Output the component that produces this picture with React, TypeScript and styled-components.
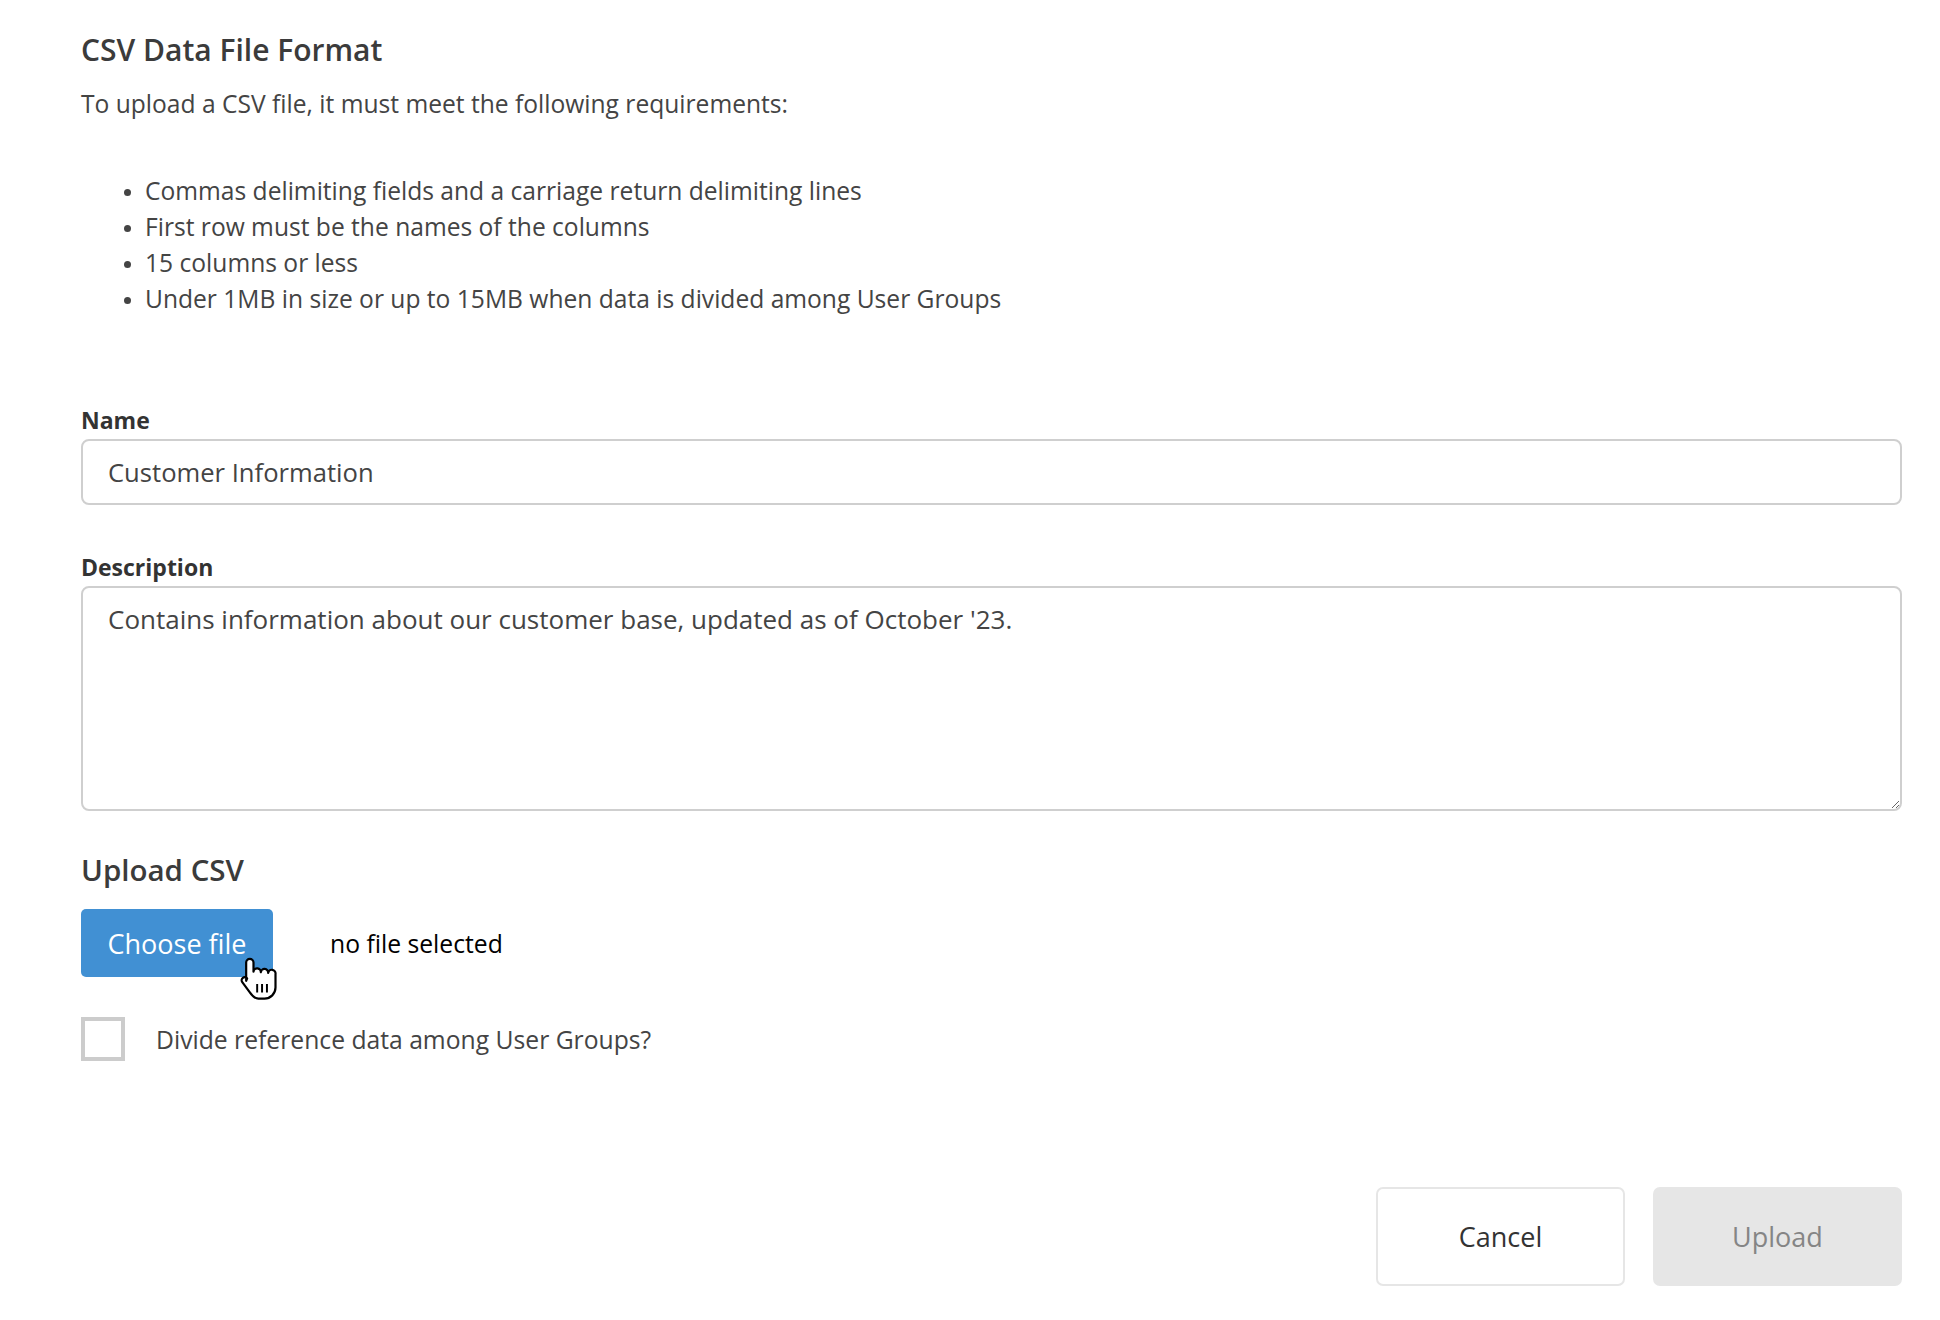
import React from 'react';
import styled, { createGlobalStyle } from 'styled-components';

const GlobalStyle = createGlobalStyle`
  body {
    margin: 0;
    background: #ffffff;
    font-family: "Open Sans", Lato, Arial, sans-serif;
    color: #444444;
  }
`;

const requirements = [
  'Commas delimiting fields and a carriage return delimiting lines',
  'First row must be the names of the columns',
  '15 columns or less',
  'Under 1MB in size or up to 15MB when data is divided among User Groups',
];

function HandCursor() {
  return (
    <svg width="44" height="44" viewBox="0 0 31 36" fill="none">
      <path
        d="M5 4.5a3 3 0 0 1 6 0V12a3 3 0 0 1 6 .5a3 3 0 0 1 6 .5a3 3 0 0 1 6 1V25c0 5-4 9-9 9H15c-3 0-5-2-7-5L1.8 20.5a2.5 2.5 0 0 1 4-3L5 19.5Z"
        fill="#ffffff"
        stroke="#000000"
        strokeWidth="1.8"
        strokeLinejoin="round"
      />
      <path d="M14 22v7M18 22v7M22 22v7" stroke="#000000" strokeWidth="1.6" />
    </svg>
  );
}

function App() {
  return (
    <Page>
      <GlobalStyle />
      <Title>CSV Data File Format</Title>
      <Intro>To upload a CSV file, it must meet the following requirements:</Intro>
      <RequirementList>
        {requirements.map((item) => (
          <li key={item}>{item}</li>
        ))}
      </RequirementList>

      <FieldLabel>Name</FieldLabel>
      <TextInput defaultValue="Customer Information" />

      <FieldLabel $gap={50}>Description</FieldLabel>
      <TextBox defaultValue="Contains information about our customer base, updated as of October '23." />

      <SectionTitle>Upload CSV</SectionTitle>
      <FileRow>
        <ChooseWrap>
          <ChooseButton type="button">Choose file</ChooseButton>
          <CursorSpot>
            <HandCursor />
          </CursorSpot>
        </ChooseWrap>
        <FileStatus>no file selected</FileStatus>
      </FileRow>

      <CheckRow>
        <CheckBox type="checkbox" />
        <CheckLabel>Divide reference data among User Groups?</CheckLabel>
      </CheckRow>

      <Footer>
        <CancelButton type="button">Cancel</CancelButton>
        <UploadButton type="button" disabled>
          Upload
        </UploadButton>
      </Footer>
    </Page>
  );
}

const Page = styled.div`
  padding: 33px 38px 40px 81px;
  display: flex;
  flex-direction: column;
`;

const Title = styled.h2`
  margin: 0;
  font-size: 30px;
  line-height: 34px;
  font-weight: 600;
  color: #3b3b3b;
`;

const Intro = styled.p`
  margin: 22px 0 0;
  font-size: 24.6px;
  line-height: 30px;
  color: #444444;
`;

const RequirementList = styled.ul`
  margin: 54px 0 0;
  padding-left: 64px;
  font-size: 24.6px;
  line-height: 36px;
  color: #444444;

  li::marker {
    font-size: 20px;
  }
`;

const FieldLabel = styled.label<{ $gap?: number }>`
  display: block;
  margin-top: ${(p) => p.$gap ?? 91}px;
  font-size: 23px;
  line-height: 24px;
  font-weight: 700;
  color: #333333;
`;

const TextInput = styled.input`
  box-sizing: border-box;
  margin-top: 7px;
  width: 100%;
  height: 66px;
  padding: 0 25px;
  border: 2px solid #cfcfcf;
  border-radius: 8px;
  font-family: inherit;
  font-size: 25.6px;
  color: #444444;
  outline: none;
`;

const TextBox = styled.textarea`
  box-sizing: border-box;
  display: block;
  margin-top: 7px;
  width: 100%;
  height: 225px;
  padding: 14px 25px;
  border: 2px solid #cfcfcf;
  border-radius: 8px;
  font-family: inherit;
  font-size: 26px;
  line-height: 34px;
  color: #444444;
  outline: none;
  resize: vertical;
`;

const SectionTitle = styled.h3`
  margin: 43px 0 0;
  font-size: 29.5px;
  line-height: 32px;
  font-weight: 600;
  color: #3b3b3b;
`;

const FileRow = styled.div`
  display: flex;
  align-items: center;
  gap: 57px;
  margin-top: 23px;
`;

const ChooseWrap = styled.div`
  position: relative;
`;

const ChooseButton = styled.button`
  height: 68px;
  width: 192px;
  padding: 0;
  border: none;
  border-radius: 5px;
  background: #4190d3;
  color: #ffffff;
  font-family: inherit;
  font-size: 27px;
`;

const CursorSpot = styled.div`
  position: absolute;
  left: 156px;
  top: 48px;
  line-height: 0;
`;

const FileStatus = styled.span`
  font-size: 24.7px;
  color: #000000;
`;

const CheckRow = styled.div`
  display: flex;
  align-items: center;
  gap: 31px;
  margin-top: 40px;
`;

const CheckBox = styled.input`
  appearance: none;
  box-sizing: border-box;
  margin: 0;
  width: 44px;
  height: 44px;
  border: 4px solid #cccccc;
  background: #ffffff;
`;

const CheckLabel = styled.span`
  font-size: 24.7px;
  color: #444444;
`;

const Footer = styled.div`
  display: flex;
  justify-content: flex-end;
  gap: 28px;
  margin-top: 126px;
`;

const FooterButton = styled.button`
  box-sizing: border-box;
  width: 249px;
  height: 99px;
  border-radius: 7px;
  font-family: inherit;
  font-size: 27px;
`;

const CancelButton = styled(FooterButton)`
  border: 2px solid #e6e6e6;
  background: #ffffff;
  color: #333333;
`;

const UploadButton = styled(FooterButton)`
  border: none;
  background: #e6e6e6;
  color: #858585;
`;

export default App;
